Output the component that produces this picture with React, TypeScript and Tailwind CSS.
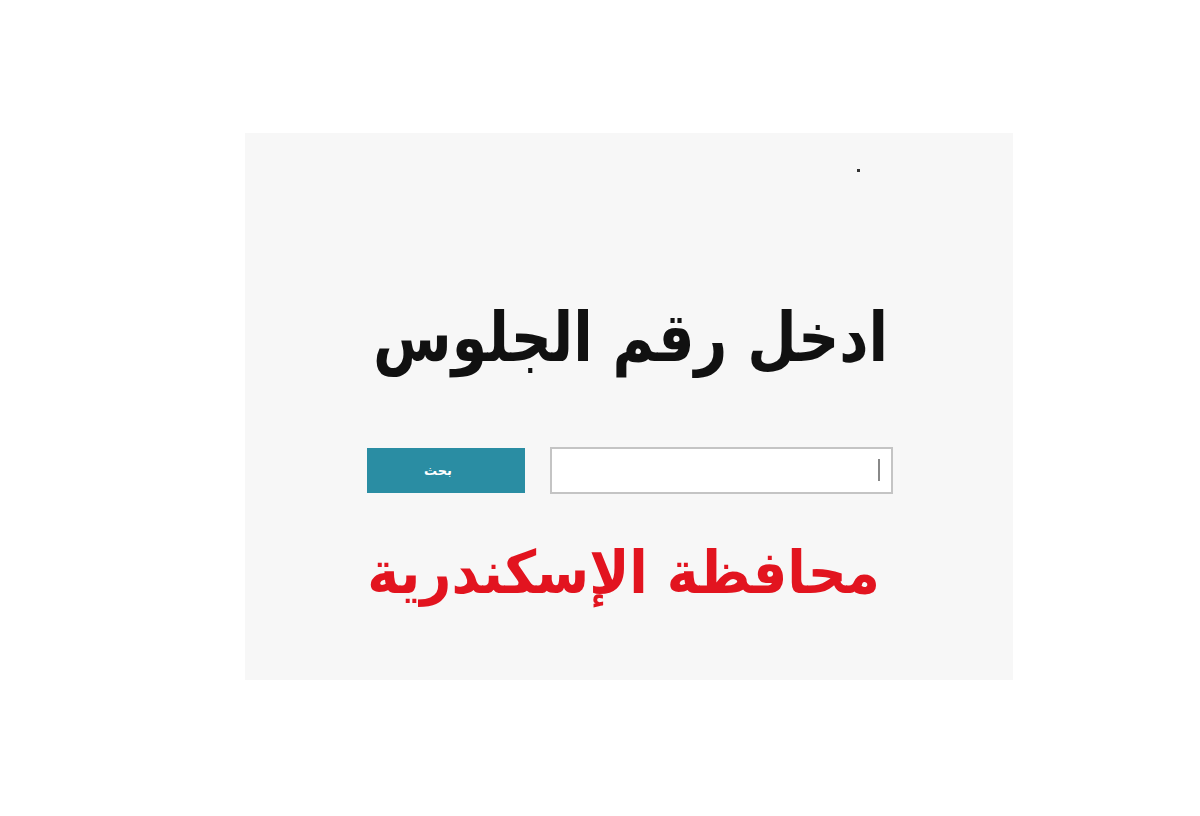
export default function App() {
  return (
    <div className="min-h-[816px] w-full bg-white pl-[245px] pt-[133px]">
      <div className="relative h-[547px] w-[768px] bg-[#f7f7f7] pl-[122px] pr-[120px] pt-[159px]" dir="rtl">
        <span className="absolute left-[612px] top-[36px] h-[3px] w-[3px] bg-[#333]" />
        <h1 className="scale-y-[1.2] whitespace-nowrap pr-[5px] text-right text-[57px] font-bold leading-[90px] text-[#111] [font-family:'DejaVu_Sans',sans-serif]">
          ادخل رقم الجلوس
        </h1>
        <div className="mt-[65px] flex h-[47px] items-stretch justify-between">
          <div className="relative w-[343px] border-2 border-[#c4c4c4] bg-white">
            <span className="absolute right-[11px] top-[10px] h-[22px] w-[2px] bg-[#888]" />
          </div>
          <button className="my-[1px] w-[158px] bg-[#2a8da3] pr-[16px] text-[13px] font-bold text-white [font-family:'DejaVu_Sans',sans-serif]">
            بحث
          </button>
        </div>
        <p className="mt-[34px] scale-y-[1.1] whitespace-nowrap pr-[13px] text-right text-[54px] font-bold leading-[90px] text-[#e2141f] [font-family:'DejaVu_Sans',sans-serif]">
          محافظة الإسكندرية
        </p>
      </div>
    </div>
  );
}
